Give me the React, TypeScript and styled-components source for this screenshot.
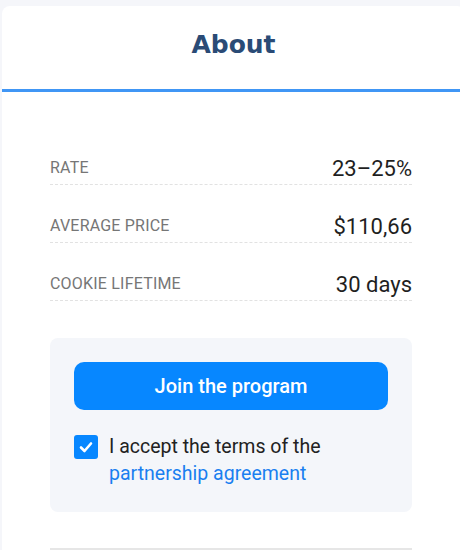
import React from "react";
import styled, { createGlobalStyle } from "styled-components";

interface Stat {
  label: string;
  value: string;
}

const stats: Stat[] = [
  { label: "Rate", value: "23–25%" },
  { label: "Average price", value: "$110,66" },
  { label: "Cookie lifetime", value: "30 days" },
];

const App = () => {
  return (
    <>
      <GlobalStyle />
      <Card>
        <CardHeader>
          <Title>About</Title>
        </CardHeader>
        <CardBody>
          <StatList>
            {stats.map((stat) => (
              <StatRow key={stat.label}>
                <StatLabel>{stat.label}</StatLabel>
                <StatValue>{stat.value}</StatValue>
              </StatRow>
            ))}
          </StatList>
          <JoinPanel>
            <JoinButton type="button">Join the program</JoinButton>
            <TermsRow>
              <CheckBox aria-checked="true" role="checkbox">
                <svg width="16" height="16" viewBox="0 0 16 16">
                  <polyline
                    points="3,8.5 6.5,12 13,4.5"
                    fill="none"
                    stroke="#fff"
                    strokeWidth="2.6"
                    strokeLinecap="round"
                    strokeLinejoin="round"
                  />
                </svg>
              </CheckBox>
              <TermsText>
                I accept the terms of the <TermsLink href="#">partnership agreement</TermsLink>
              </TermsText>
            </TermsRow>
          </JoinPanel>
          <Divider />
        </CardBody>
      </Card>
    </>
  );
};

const GlobalStyle = createGlobalStyle`
  html, body {
    margin: 0;
    background: #f5f6fa;
    overflow: hidden;
  }

  body {
    font-family: Roboto, "Liberation Sans", Arial, sans-serif;
  }

  * {
    box-sizing: border-box;
  }
`;

const Card = styled.div`
  margin: 6px -5px 0 2px;
  background: #fff;
  border-radius: 8px 8px 0 0;
  min-height: 560px;
`;

const CardHeader = styled.div`
  height: 86px;
  padding-top: 25px;
  border-bottom: 3px solid #4096f5;
  text-align: center;
`;

const Title = styled.h2`
  margin: 0;
  font-family: "DejaVu Sans", sans-serif;
  font-size: 25px;
  line-height: 28px;
  font-weight: 700;
  color: #2a4b76;
`;

const CardBody = styled.div`
  padding: 64px 53px 0 48px;
`;

const StatList = styled.div`
  display: flex;
  flex-direction: column;
  gap: 29px;
`;

const StatRow = styled.div`
  display: flex;
  justify-content: space-between;
  align-items: flex-end;
  padding-bottom: 2px;
  border-bottom: 1px dashed #e2e2e2;
`;

const StatLabel = styled.span`
  margin-bottom: 5px;
  font-size: 16px;
  line-height: 18px;
  letter-spacing: 0.2px;
  text-transform: uppercase;
  color: #767676;
`;

const StatValue = styled.span`
  font-size: 22px;
  line-height: 26px;
  color: #1f1f1f;
`;

const JoinPanel = styled.div`
  margin-top: 37px;
  padding: 24px 24px 25px;
  background: #f4f6fa;
  border-radius: 8px;
`;

const JoinButton = styled.button`
  display: block;
  width: 100%;
  height: 48px;
  border: none;
  border-radius: 10px;
  background: #0787ff;
  color: #fff;
  font-family: Roboto, sans-serif;
  font-size: 20px;
  font-weight: 500;
  cursor: pointer;
`;

const TermsRow = styled.label`
  display: flex;
  align-items: flex-start;
  gap: 11px;
  margin-top: 23px;
`;

const CheckBox = styled.span`
  flex: none;
  display: flex;
  align-items: center;
  justify-content: center;
  width: 24px;
  height: 24px;
  margin-top: 2px;
  border-radius: 3px;
  background: #0787ff;
`;

const TermsText = styled.span`
  font-size: 19.5px;
  line-height: 27px;
  color: #222;
`;

const TermsLink = styled.a`
  color: #1a7ff0;
  text-decoration: none;
`;

const Divider = styled.div`
  margin-top: 36px;
  height: 2px;
  background: #e6e6e6;
`;

export default App;
